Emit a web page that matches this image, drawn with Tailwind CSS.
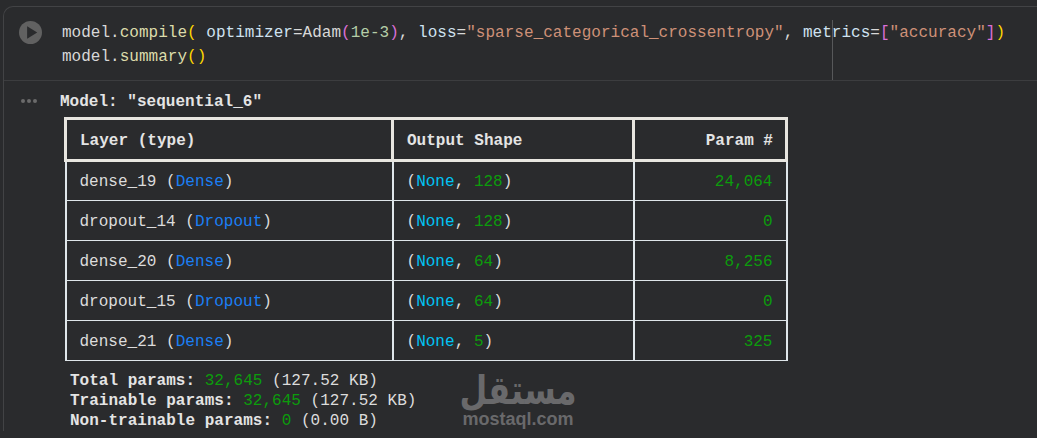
<!DOCTYPE html>
<html lang="en">
<head>
    <meta charset="UTF-8">
    <title>model.summary</title>
    <script src="https://cdn.jsdelivr.net/npm/@tailwindcss/browser@4"></script>
</head>
<body class="bg-[#2a2b2d] h-[438px] w-[1037px] overflow-hidden relative font-['Liberation_Mono',monospace] text-[16px] tracking-[0.02px] text-[#dcdcdc]">
    <div class="ml-[3px] mt-[6px] border-t border-l border-[#424345] rounded-tl-[10px]">
        <!-- code cell -->
        <div class="h-[74px] flex border-b border-[#3c3d3f] relative">
            <div class="w-[58px] shrink-0 pt-[14px] pl-[15px]">
                <svg width="23" height="23" viewBox="0 0 24 24"><circle cx="12" cy="12" r="12" fill="#616161"/><path d="M8.5 5.5 L19 12 L8.5 18.5 Z" fill="#2a2b2d"/></svg>
            </div>
            <pre class="pt-[14px] leading-[24px] font-['Liberation_Mono',monospace] text-[#d8d8d8]"><span>model.</span><span class="text-[#dcdcaa]">compile</span><span class="text-[#ffd700]">(</span> <span class="text-[#cfe2f0]">optimizer</span>=Adam<span class="text-[#da70d6]">(</span><span class="text-[#b5cea8]">1e-3</span><span class="text-[#da70d6]">)</span>, <span class="text-[#cfe2f0]">loss</span>=<span class="text-[#ce9178]">"sparse_categorical_crossentropy"</span>, <span class="text-[#cfe2f0]">metrics</span>=<span class="text-[#da70d6]">[</span><span class="text-[#ce9178]">"accuracy"</span><span class="text-[#da70d6]">]</span><span class="text-[#ffd700]">)</span>
model.<span class="text-[#dcdcaa]">summary</span><span class="text-[#ffd700]">()</span></pre>
            <div class="absolute left-[828px] top-[13px] h-[60px] w-px bg-[#57585a]"></div>
        </div>
        <!-- output -->
        <div class="flex">
            <div class="w-[56px] shrink-0 pt-[18px] pl-[17px] flex gap-[2px]">
                <span class="w-[4px] h-[4px] rounded-full bg-[#6b6b6b]"></span>
                <span class="w-[4px] h-[4px] rounded-full bg-[#6b6b6b]"></span>
                <span class="w-[4px] h-[4px] rounded-full bg-[#6b6b6b]"></span>
            </div>
            <div>
                <p class="pt-[11px] leading-[20px] font-bold text-[#e4e4e4]">Model: "sequential_6"</p>
                <table class="mt-[5px] ml-[4px] border-collapse table-fixed w-[724px]">
                    <thead>
                        <tr class="h-[42px] font-bold text-[#e4e4e4]">
                            <th class="w-[327px] border-[3px] border-[#e8e6e0] pt-[2px] px-[13px] text-left">Layer (type)</th>
                            <th class="w-[241px] border-[3px] border-[#e8e6e0] pt-[2px] pl-[13px] pr-[12px] text-left">Output Shape</th>
                            <th class="border-[3px] border-[#e8e6e0] pt-[2px] px-[12px] text-right">Param #</th>
                        </tr>
                    </thead>
                    <tbody>
                        <tr class="h-[40px]">
                            <td class="border-x-2 border-y border-[#dfe6ea] pt-[2px] px-[13px]">dense_19 (<span class="text-[#1a7ff5]">Dense</span>)</td>
                            <td class="border-x-2 border-y border-[#dfe6ea] pt-[2px] px-[13px]">(<span class="text-[#00c4f5]">None</span>, <span class="text-[#0c9c0c]">128</span>)</td>
                            <td class="border-x-2 border-y border-[#dfe6ea] pt-[2px] px-[13px] text-right text-[#0c9c0c]">24,064</td>
                        </tr>
                        <tr class="h-[40px]">
                            <td class="border-x-2 border-y border-[#dfe6ea] pt-[2px] px-[13px]">dropout_14 (<span class="text-[#1a7ff5]">Dropout</span>)</td>
                            <td class="border-x-2 border-y border-[#dfe6ea] pt-[2px] px-[13px]">(<span class="text-[#00c4f5]">None</span>, <span class="text-[#0c9c0c]">128</span>)</td>
                            <td class="border-x-2 border-y border-[#dfe6ea] pt-[2px] px-[13px] text-right text-[#0c9c0c]">0</td>
                        </tr>
                        <tr class="h-[40px]">
                            <td class="border-x-2 border-y border-[#dfe6ea] pt-[2px] px-[13px]">dense_20 (<span class="text-[#1a7ff5]">Dense</span>)</td>
                            <td class="border-x-2 border-y border-[#dfe6ea] pt-[2px] px-[13px]">(<span class="text-[#00c4f5]">None</span>, <span class="text-[#0c9c0c]">64</span>)</td>
                            <td class="border-x-2 border-y border-[#dfe6ea] pt-[2px] px-[13px] text-right text-[#0c9c0c]">8,256</td>
                        </tr>
                        <tr class="h-[40px]">
                            <td class="border-x-2 border-y border-[#dfe6ea] pt-[2px] px-[13px]">dropout_15 (<span class="text-[#1a7ff5]">Dropout</span>)</td>
                            <td class="border-x-2 border-y border-[#dfe6ea] pt-[2px] px-[13px]">(<span class="text-[#00c4f5]">None</span>, <span class="text-[#0c9c0c]">64</span>)</td>
                            <td class="border-x-2 border-y border-[#dfe6ea] pt-[2px] px-[13px] text-right text-[#0c9c0c]">0</td>
                        </tr>
                        <tr class="h-[40px]">
                            <td class="border-x-2 border-y border-[#dfe6ea] pt-[2px] px-[13px]">dense_21 (<span class="text-[#1a7ff5]">Dense</span>)</td>
                            <td class="border-x-2 border-y border-[#dfe6ea] pt-[2px] px-[13px]">(<span class="text-[#00c4f5]">None</span>, <span class="text-[#0c9c0c]">5</span>)</td>
                            <td class="border-x-2 border-y border-[#dfe6ea] pt-[2px] px-[13px] text-right text-[#0c9c0c]">325</td>
                        </tr>
                    </tbody>
                </table>
                <div class="mt-[10px] ml-[10px] leading-[20px]">
                    <p><span class="font-bold text-[#e4e4e4]">Total params:</span> <span class="text-[#0c9c0c]">32,645</span> (127.52 KB)</p>
                    <p><span class="font-bold text-[#e4e4e4]">Trainable params:</span> <span class="text-[#0c9c0c]">32,645</span> (127.52 KB)</p>
                    <p><span class="font-bold text-[#e4e4e4]">Non-trainable params:</span> <span class="text-[#0c9c0c]">0</span> (0.00 B)</p>
                </div>
            </div>
        </div>
    </div>
    <!-- watermark -->
    <div class="absolute left-[458px] top-[378px] w-[120px] text-center text-[#69696b] tracking-normal">
        <p class="font-['DejaVu_Sans',sans-serif] font-bold text-[32px] leading-[32px] scale-y-125 origin-bottom" dir="rtl" lang="ar">مستقل</p>
        <p class="font-['Liberation_Sans',sans-serif] font-bold text-[18px] leading-[18px]">mostaql.com</p>
    </div>
</body>
</html>
